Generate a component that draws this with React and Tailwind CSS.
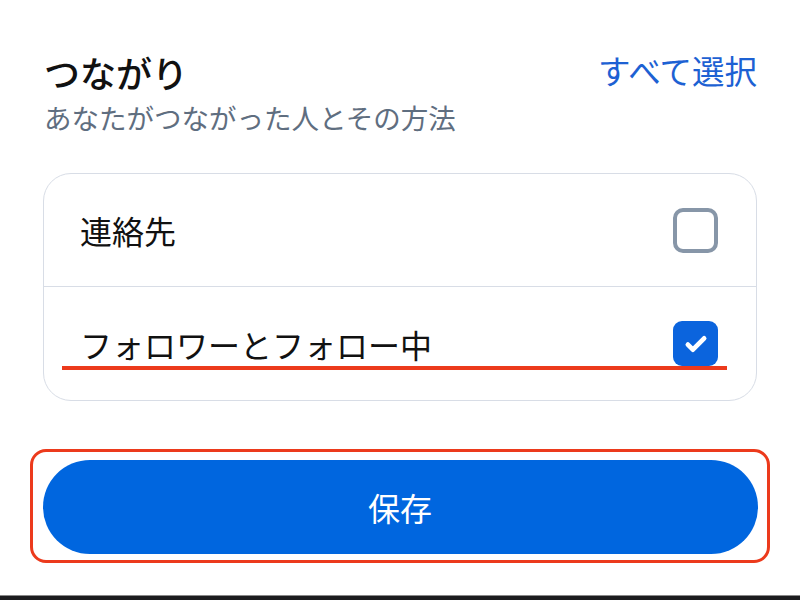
import React, { useState } from 'react';

const jp = { fontFamily: '"Noto Sans CJK JP", "Noto Sans", sans-serif' };

function Casilla({ marcado }) {
  if (marcado) {
    return (
      <div className="w-[45px] h-[45px] rounded-[9px] bg-[#0b64dd] flex items-center justify-center">
        <svg width="30" height="30" viewBox="0 0 24 24" fill="none">
          <path d="M5.5 12.5l4 4L18.5 7.5" stroke="white" strokeWidth="3.8" strokeLinecap="round" strokeLinejoin="round" />
        </svg>
      </div>
    );
  }
  return <div className="w-[45px] h-[45px] rounded-[10px] border-[4px] border-[#8796a8] bg-white" />;
}

export default function App() {
  const [opciones, setOpciones] = useState({ contactos: false, seguidores: true });

  return (
    <div className="w-[800px] h-[600px] bg-white flex flex-col overflow-hidden" style={jp}>
      <div className="flex-1 px-[43px] pt-[47px]">
        {/* CABECERA */}
        <div className="flex items-start justify-between">
          <div>
            <h1 className="text-[36px] leading-[50px] font-medium text-[#111] pl-[1px]">つながり</h1>
            <p className="text-[27.5px] leading-[40px] text-[#5f6e80] pl-[1px]">あなたがつながった人とその方法</p>
          </div>
          <button className="text-[32.5px] leading-[46px] text-[#1d61d3]">すべて選択</button>
        </div>

        {/* TARJETA DE OPCIONES */}
        <div className="mt-[36px] border border-[#d8dde6] rounded-[28px]">
          <div
            className="h-[113px] flex items-center justify-between pl-[36px] pr-[38px] border-b border-[#d8dde6]"
            onClick={() => setOpciones(o => ({ ...o, contactos: !o.contactos }))}
          >
            <span className="text-[32px] text-[#111]">連絡先</span>
            <Casilla marcado={opciones.contactos} />
          </div>
          <div
            className="relative h-[113px] flex items-center justify-between pl-[36px] pr-[38px]"
            onClick={() => setOpciones(o => ({ ...o, seguidores: !o.seguidores }))}
          >
            <span className="text-[32px] text-[#111]">フォロワーとフォロー中</span>
            <Casilla marcado={opciones.seguidores} />
            <div className="absolute left-[18px] top-[79px] w-[665px] h-[3.5px] bg-[#ec3a1c]" />
          </div>
        </div>

        {/* BOTON GUARDAR */}
        <div className="mt-[48px] -mx-[13px] border-[3.5px] border-[#ec3a1c] rounded-[16px] px-[9.5px] pt-[7.5px] pb-[6.5px]">
          <button className="w-full h-[94px] rounded-full bg-[#0066df] text-white text-[32px]">保存</button>
        </div>
      </div>
      <div className="h-[5px] bg-[#1c1c1e] border-t border-[#888]" />
    </div>
  );
}
